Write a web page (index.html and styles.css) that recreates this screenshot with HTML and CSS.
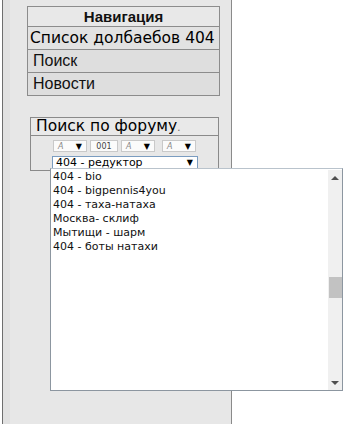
FILE: index.html
```html
<!DOCTYPE html>
<html lang="ru">
<head>
<meta charset="utf-8">
<link rel="stylesheet" href="styles.css">
</head>
<body>
<div class="page">
  <div class="sidebar">
    <div class="nav">
      <div class="nav-head">Навигация</div>
      <div class="nav-row big">Список долбаебов 404</div>
      <div class="nav-row">Поиск</div>
      <div class="nav-row">Новости</div>
    </div>
    <div class="search">
      <div class="search-title">Поиск по форуму<span class="dot">.</span></div>
      <div class="search-body">
        <div class="selects">
          <div class="sel"><span class="val">A</span><span class="arr">▼</span></div>
          <div class="sel num"><span class="val">001</span></div>
          <div class="sel"><span class="val">A</span><span class="arr">▼</span></div>
          <div class="sel last"><span class="val">A</span><span class="arr">▼</span></div>
        </div>
        <div class="bigsel"><span>404 - редуктор</span><span class="arr">▼</span></div>
      </div>
    </div>
  </div>
  <div class="dropdown">
    <ul class="opts">
      <li>404 - bio</li>
      <li>404 - bigpennis4you</li>
      <li>404 - таха-натаха</li>
      <li>Москва- склиф</li>
      <li>Мытищи - шарм</li>
      <li>404 - боты натахи</li>
    </ul>
    <div class="scroll">
      <div class="sarr up"></div>
      <div class="track"><div class="thumb"></div></div>
      <div class="sarr down"></div>
    </div>
  </div>
</div>
</body>
</html>
```
FILE: styles.css
```css
html, body {
  margin: 0;
  padding: 0;
  background: #ffffff;
}
.page {
  position: relative;
  width: 352px;
  height: 424px;
  overflow: hidden;
}
.sidebar {
  margin-left: 2px;
  width: 230px;
  height: 424px;
  background: #e7e7e7;
  border-left: 1px solid #6e6e6e;
  border-right: 1px solid #8a8a8a;
  box-shadow: inset 7px 0 0 #e1e1e1;
  padding-top: 6px;
  box-sizing: border-box;
}
.nav {
  margin-left: 24px;
  width: 193px;
  border: 1px solid #8c8c8c;
  box-sizing: border-box;
  font-family: "Liberation Sans", Arial, sans-serif;
  color: #111;
}
.nav-head {
  height: 19px;
  line-height: 19px;
  text-align: center;
  font-weight: bold;
  font-size: 15px;
  background: #e8e8e8;
  border-bottom: 1px solid #8c8c8c;
}
.nav-row {
  height: 22px;
  line-height: 22px;
  font-size: 16px;
  padding-left: 5px;
  background: #dedede;
  border-bottom: 1px solid #8c8c8c;
}
.nav-row:last-child {
  border-bottom: none;
}
.nav-row.big {
  font-family: "DejaVu Sans", Verdana, sans-serif;
  font-size: 15.5px;
  padding-left: 2px;
  background: #e2e2e2;
  color: #000;
}
.search {
  margin-left: 27px;
  margin-top: 21px;
  width: 189px;
  height: 54px;
  border: 1px solid #8a8a8a;
  box-sizing: border-box;
}
.search-title {
  height: 17px;
  line-height: 17px;
  border-bottom: 1px solid #8a8a8a;
  font-family: "DejaVu Sans", Verdana, sans-serif;
  font-size: 15.5px;
  padding-left: 5px;
  color: #000;
  background: #e9e9e9;
}
.dot {
  font-size: 10px;
  color: #666;
}
.search-body {
  padding-top: 4px;
  padding-left: 22px;
}
.selects {
  display: flex;
  gap: 3px;
}
.sel {
  height: 10px;
  width: 24px;
  background: #fbfbfb;
  border: 1px solid #c9c9c9;
  display: flex;
  justify-content: space-between;
  align-items: center;
  font-family: "DejaVu Sans", Verdana, sans-serif;
  font-size: 8px;
  padding: 0 4px 0 4px;
}
.sel.num {
  width: 22px;
  padding: 0 2px;
  justify-content: center;
}
.sel.last {
  margin-left: 4px;
}
.sel .val {
  color: #888;
  font-style: italic;
}
.sel.num .val {
  font-style: normal;
  color: #444;
}
.sel .arr {
  font-size: 8px;
  color: #000;
}
.bigsel {
  margin-top: 4px;
  margin-left: -1px;
  width: 146px;
  height: 13px;
  background: #ffffff;
  border: 1px solid #7a9cc0;
  box-sizing: border-box;
  display: flex;
  justify-content: space-between;
  align-items: center;
  padding: 0 4px 0 3px;
  font-family: "DejaVu Sans", Verdana, sans-serif;
  font-size: 11px;
  color: #000;
}
.bigsel .arr {
  font-size: 8px;
}
.dropdown {
  position: absolute;
  left: 50px;
  top: 168px;
  width: 293px;
  height: 223px;
  background: #ffffff;
  border: 1px solid #8c96a0;
  border-top-color: #b9c3cc;
  box-sizing: border-box;
  display: flex;
}
.opts {
  list-style: none;
  margin: 0;
  padding: 1px 0 0 2px;
  flex: 1;
  font-family: "DejaVu Sans", Verdana, sans-serif;
  font-size: 11px;
  color: #111;
}
.opts li {
  height: 14px;
  line-height: 14px;
}
.scroll {
  width: 14px;
  background: #f0f0f0;
  display: flex;
  flex-direction: column;
  margin-top: 1px;
}
.sarr {
  height: 15px;
  display: flex;
  align-items: center;
  justify-content: center;
}
.sarr.up::before {
  content: "";
  border-left: 4px solid transparent;
  border-right: 4px solid transparent;
  border-bottom: 4px solid #505050;
}
.sarr.down::before {
  content: "";
  border-left: 4px solid transparent;
  border-right: 4px solid transparent;
  border-top: 4px solid #505050;
}
.track {
  flex: 1;
  position: relative;
}
.thumb {
  position: absolute;
  left: 1px;
  right: 0;
  top: 92px;
  height: 21px;
  background: #c2c2c2;
}
```
